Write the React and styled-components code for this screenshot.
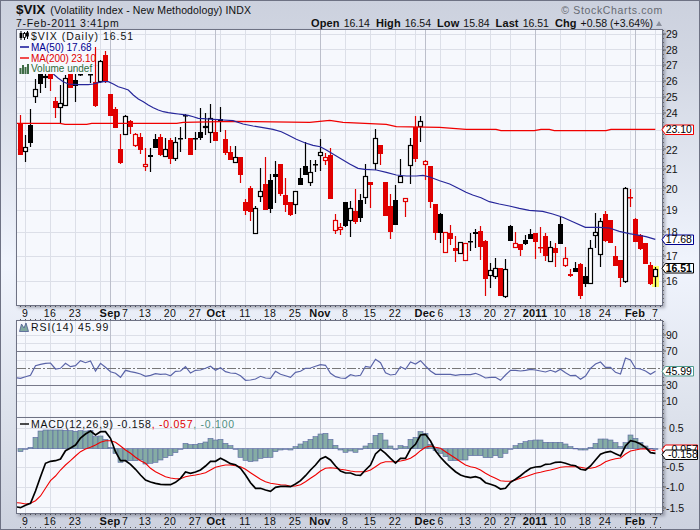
import React from "react";
import styled, { createGlobalStyle } from "styled-components";

const Global = createGlobalStyle`
  html, body { margin: 0; padding: 0; background: #d0d5e1; }
  #root { width: 700px; height: 530px; }
`;

const sans = `"Liberation Sans", Arial, sans-serif`;

const Frame = styled.div`
  box-sizing: border-box;
  width: 700px;
  height: 530px;
  border: 1px solid #6e7284;
  padding: 0 0 0 15px;
  overflow: hidden;
  background: linear-gradient(180deg, #ccd1de 0%, #d2d7e3 12%, #f0f4fd 50%, #dde2ec 78%, #cdd2df 100%);
  font-family: ${sans};
  color: #111;
`;
const Header = styled.header`
  height: 28px;
  width: 647px;
  display: flex;
  flex-direction: column;
`;
const TopRow = styled.div`
  height: 16px;
  display: flex;
  align-items: flex-end;
  justify-content: space-between;
  white-space: nowrap;
`;
const Title = styled.div`
  display: flex;
  align-items: baseline;
  gap: 5px;
`;
const Symbol = styled.b`
  font-size: 13.5px;
  line-height: 14px;
`;
const Name = styled.span`
  font-size: 10.5px;
  letter-spacing: 0.13px;
`;
const Logo = styled.span`
  font-size: 10.5px;
  letter-spacing: 0.65px;
  color: #666a72;
  margin-bottom: 1px;
`;
const BottomRow = styled.div`
  height: 12px;
  display: flex;
  justify-content: space-between;
  align-items: center;
  white-space: nowrap;
  font-size: 10.5px;
`;
const Stamp = styled.span`
  letter-spacing: 0.7px;
`;
const Quote = styled.div`
  display: flex;
  align-items: baseline;
  gap: 4px;
`;
const QLabel = styled.b`
  font-size: 11px;
  letter-spacing: 0.1px;
  margin-left: ${(p) => (p.$first ? 0 : 2)}px;
`;
const QValue = styled.span`
  font-size: 10.5px;
`;
const Arrow = styled.i`
  width: 0;
  height: 0;
  margin-left: -1px;
  margin-right: 1px;
  border-left: 3.5px solid transparent;
  border-right: 3.5px solid transparent;
  border-bottom: 5px solid #8a8f9c;
  align-self: center;
`;

const Pane = styled.div`
  display: flex;
  align-items: stretch;
  height: ${(p) => p.$h}px;
  margin-top: ${(p) => p.$overlap || 0}px;
`;
const Plot = styled.div`
  position: relative;
  box-sizing: border-box;
  width: 647px;
  height: 100%;
  flex: none;
  border: 1px solid #6e7284;
  background: #f6f8fd;
  box-shadow: 2px 2px 3px rgba(40, 44, 60, 0.35);
`;
const PlotSvg = styled.svg`
  display: block;
  width: 645px;
  height: 100%;
  overflow: hidden;
`;
const AxisSvg = styled.svg`
  display: block;
  position: relative;
  width: 36px;
  height: 100%;
  flex: none;
  overflow: visible;
  z-index: 2;
  font-family: ${sans};
`;
const DateSvg = styled.svg`
  display: block;
  width: 647px;
  height: ${(p) => p.$h}px;
  overflow: visible;
  font-family: ${sans};
`;
const Legend = styled.div`
  position: absolute;
  left: 0;
  top: 0;
  width: ${(p) => p.$w}px;
  height: ${(p) => p.$h}px;
  background: ${(p) => (p.$clear ? "transparent" : "#f6f8fd")};
  padding-top: 1px;
  box-sizing: border-box;
`;
const LegendRow = styled.div`
  display: flex;
  align-items: center;
  height: 10.8px;
  gap: 2px;
  padding-left: 2px;
  white-space: nowrap;
  font-size: ${(p) => p.$size || 10}px;
  letter-spacing: ${(p) => p.$ls ?? 0}px;
  color: ${(p) => p.$color || "#111"};
  svg { flex: none; }
`;
const LegendText = styled.span`
  color: ${(p) => p.$color || "inherit"};
`;

const gx = [25.5,50.5,75.5,100.5,110.5,125.5,145.5,170.5,195.5,215.5,220.5,245.5,270.5,295.5,320.5,345.5,370.5,395.5,415.5,425.5,440.5,465.5,490.5,510.5,535.5,560.5,585.5,605.5,630.5,635.5,655.5];
const darkGx = new Set([110.5,215.5,320.5,425.5,535.5,635.5]);
const dates = [["9",25],["16",50],["23",75],["Sep",110,1],["7",125],["13",145],["20",170],["27",195],["Oct",216,1],["11",245],["18",270],["25",295],["Nov",320,1],["8",345],["15",370],["22",395],["Dec",425,1],["6",440.5],["13",465],["20",490],["27",510],["2011",535,1],["10",560],["18",585],["24",605],["Feb",635,1],["7",655]];

const candles = [
[115,155,123,155,"r"],[135,162,147,152,"h"],[109,147,125,143,"b"],[79,103,89,97,"h"],[70,93,74,84,"b"],[72,88,76,78,"h"],[74,91,74,79,"r"],[97,118,101,108,"r"],[85,123,103,108,"h"],[75,106,78,106,"h"],
[74,88,74,88,"r"],[68,102,80,86,"b"],[70,76,74,75,"b"],[70,72,71,72,"b"],[70,83,74,75,"b"],[47,107,82,106,"r"],[60,83,61,82,"h"],[51,83,55,82,"r"],[94,116,94,116,"r"],[107,128,109,128,"r"],
[134,164,149,163,"r"],[115,135,116,135,"h"],[120,134,121,127,"r"],[133,147,134,146,"o"],[133,154,137,150,"r"],[148,171,164,167,"o"],[148,172,155,157,"b"],[134,148,139,148,"b"],[134,156,137,155,"r"],[138,157,149,157,"h"],
[138,164,140,159,"r"],[137,161,142,159,"h"],[127,152,138,139,"b"],[114,139,115,116,"b"],[138,155,138,155,"r"],[132,150,138,139,"b"],[108,140,132,138,"b"],[113,135,126,128,"h"],[104,143,118,133,"h"],[120,141,132,141,"r"],
[107,132,119,122,"b"],[130,155,139,153,"r"],[146,160,152,160,"r"],[146,163,157,163,"h"],[157,183,157,175,"r"],[199,215,202,211,"r"],[186,221,188,212,"r"],[206,234,208,234,"h"],[168,202,191,197,"h"],[157,210,184,210,"r"],
[174,213,180,209,"b"],[161,203,174,177,"b"],[164,196,164,194,"r"],[178,212,195,205,"r"],[202,216,202,215,"r"],[191,214,191,205,"h"],[168,185,178,185,"b"],[142,175,166,175,"b"],[160,186,172,183,"h"],[160,172,164,165,"b"],
[139,171,152,156,"h"],[153,165,157,161,"o"],[148,199,155,199,"r"],[214,234,220,231,"o"],[223,235,227,230,"o"],[202,227,202,226,"b"],[201,237,208,221,"h"],[189,224,211,222,"r"],[194,222,200,218,"b"],[164,204,176,198,"h"],
[182,208,182,185,"r"],[129,170,138,164,"h"],[145,165,145,154,"r"],[182,216,182,216,"r"],[194,239,206,232,"r"],[185,225,200,225,"b"],[159,183,176,183,"h"],[198,217,198,202,"o"],[138,184,145,166,"h"],[116,162,127,159,"r"],
[116,142,121,127,"h"],[160,180,161,165,"o"],[166,208,166,202,"r"],[204,240,204,233,"r"],[213,243,214,233,"b"],[232,253,232,253,"o"],[225,245,233,239,"r"],[236,262,248,251,"r"],[242,254,242,254,"h"],[243,261,243,261,"o"],
[233,251,241,242,"b"],[229,248,232,234,"b"],[226,260,231,247,"r"],[240,296,241,279,"r"],[263,288,270,276,"h"],[258,279,268,277,"h"],[268,296,268,296,"r"],[259,298,269,297,"h"],[225,241,226,241,"b"],[232,248,243,248,"o"],
[244,256,244,250,"r"],[235,245,240,244,"b"],[229,239,234,239,"b"],[233,259,233,242,"r"],[227,253,247,248,"r"],[233,261,236,256,"r"],[241,262,247,262,"h"],[243,267,248,253,"r"],[217,244,224,244,"b"],[247,267,258,266,"o"],
[269,277,274,276,"r"],[262,272,268,272,"b"],[263,299,264,296,"r"],[267,287,276,284,"b"],[240,284,248,284,"h"],[213,248,232,236,"h"],[218,267,221,255,"h"],[211,242,214,241,"r"],[220,243,220,243,"r"],[246,266,256,266,"r"],
[260,287,260,278,"r"],[187,283,188,282,"h"],[189,207,197,198,"r"],[218,242,219,242,"r"],[234,250,235,249,"r"],[243,264,243,264,"r"],[262,285,265,284,"r"],[267,287,269,277,"h"],
];

const rsi = [
  [290,[263,265,260,256,227,223,220,219,237,235,220,230,227,212,218,213,243,220,232,245,250,262,241,245,248,252,259,256,251,253,252,257,244,243,230,249,241,240,235,229,241,233,245,249]],
  [290,[250,257,271,270,267,259,264,265,244,253,257,262,247,244,235,234,229,224,226,250,260,264,265,254,258,256,229,232,208,218,248,255,253,230,238,216,222,212,228,243,253,253,253,253,256,254,254]],
  [290,[254,250,256,264,262,262,271,255,241,241,243,241,238,240,243,246,241,246,238,248,257,256,268,258,235,222,216,232,232,247,252,204,210,235,237,243,253,244]],
];
const macd = [
  [410,[290,293,286,280,243,200,160,154,152,147,122,114,105,84,72,63,75,65,65,85,125,152,152,163,178,195,210,216,220,223,224,224,217,205,186,190,186,180,168,154,154,145,152,161]],
  [410,[164,175,195,218,235,235,240,244,232,229,229,230,222,212,197,180,165,147,140,150,168,183,189,189,195,196,180,165,132,118,130,145,159,145,145,117,103,75,73,93,122,142,158,172,185,195,200]],
  [410,[203,200,205,218,223,228,237,235,217,208,197,185,175,171,170,163,162,157,156,160,165,167,178,180,168,150,133,127,124,131,138,108,92,95,102,112,128,130]],
];
const signal = [
  [410,[278,279,282,280,272,258,235,212,198,180,165,152,138,125,117,112,105,97,92,92,97,108,120,130,142,152,160,175,185,193,200,204,206,206,200,197,195,192,188,180,172,168,165,165]],
  [410,[167,170,178,188,198,208,215,220,222,224,225,229,228,224,215,205,195,183,175,173,175,178,180,183,185,185,185,180,170,160,155,155,155,153,150,145,135,122,112,108,112,115,125,135,145,155,165]],
  [410,[170,173,180,190,198,205,212,214,214,210,205,200,195,190,187,183,180,176,172,170,170,170,172,175,175,172,165,155,150,146,144,132,123,120,117,116,120,122]],
];
const hist = [125,117,112,82,63,60,60,60,60,61,62,64,62,63,62,80,78,88,112,130,157,152,152,152,150,162,160,157,150,143,137,128,118,100,104,103,100,96,85,90,88,100,107,117,142,151,155,153,145,143,142,125,120,118,120,110,102,95,88,80,72,70,88,106,120,127,123,127,118,108,100,76,70,90,108,117,107,110,88,82,65,70,103,122,130,140,152,152,150,150,137,137,137,143,143,137,143,130,117,107,100,95,92,90,90,97,97,97,97,102,110,115,120,120,112,100,87,87,90,98,110,98,75,85,97,108,115,117];

const series = (segs) => {
  const ys = segs.flatMap(([base, vals]) => vals.map((v) => base + v / 3));
  return ys.map((y, i) => `${15.5 + 5 * i},${y.toFixed(1)}`).join(" ");
};
const zpts = (ox, oy, list) => list.map(([x, y]) => `${(ox + x / 3).toFixed(1)},${(oy + y / 3).toFixed(1)}`).join(" ");

const ma50 = [
  zpts(0,0,[[160,222],[175,235],[190,245],[205,252],[220,253],[235,254],[250,254],[265,254],[280,252],[295,248],[310,245],[325,245],[340,252],[355,260],[370,265],[385,270],[400,285],[415,297],[430,305],[445,315],[460,323],[475,330],[490,335],[505,338],[520,340],[535,342],[550,344],[565,346],[580,350],[595,355],[610,356],[625,357],[640,358],[655,359],[670,360],[699,362]]),
  zpts(233,0,[[30,372],[60,378],[90,383],[120,388],[145,395],[165,405],[190,418],[215,428],[240,436],[262,440],[280,450],[300,462],[325,477],[350,492],[375,505],[395,508],[430,510],[460,517],[490,525]]),
  zpts(233,130,[[520,138],[550,138],[570,136],[590,141],[620,152],[650,162],[680,177],[699,187]]),
  zpts(466,130,[[20,195],[45,203],[70,215],[100,222],[130,228],[160,235],[190,241],[230,244],[260,252],[290,262],[320,275],[358,292],[400,292],[430,294],[460,304],[490,311],[520,316],[540,320],[568,328]]),
].join(" ");
const ma200 = [
  zpts(0,0,[[50,370],[180,370],[195,373],[260,373],[275,370],[530,370],[550,367],[699,364]]),
  zpts(233,0,[[230,367],[290,361],[330,367],[460,373],[490,380],[620,382],[699,388]]),
  zpts(466,0,[[90,388],[105,392],[205,392],[225,388],[250,388],[265,392],[420,392],[435,388],[568,388]]),
].join(" ");

const GridV = ({ y1, y2 }) => (
  <g>
    {gx.map((x) => (
      <line key={x} x1={x} x2={x} y1={y1} y2={y2} stroke={darkGx.has(x) ? "#bcbfcb" : "#dcdfe8"} strokeWidth="1" />
    ))}
  </g>
);
const GridH = ({ ys, color = "#dcdfe8" }) => (
  <g>
    {ys.map((y) => (
      <line key={y} x1="17" x2="662" y1={y} y2={y} stroke={color} strokeWidth="1" />
    ))}
  </g>
);

const Candle = ({ d: [top, bot, bt, bb, type], k }) => {
  const x = 20.5 + 5 * k;
  const red = type === "r" || type === "o";
  const ink = red ? "#e00000" : "#000";
  const hollow = type === "h" || type === "o";
  return (
    <g>
      <line x1={x} x2={x} y1={top} y2={bot} stroke={ink} strokeWidth="1.2" />
      {hollow ? (
        <rect x={x - 2} y={bt + 0.5} width="4" height={Math.max(bb - bt - 1, 1)} fill="#fff" stroke={ink} strokeWidth="1.2" />
      ) : (
        <rect x={x - 2.5} y={bt} width="5" height={Math.max(bb - bt, 1.5)} fill={ink} />
      )}
    </g>
  );
};

const Tag = ({ y, text, color, bold, w = 28, tx = 665.7 }) => (
  <g>
    <path d={`M665.5 ${y} h${w} v9.5 h-${w} l-3.5 -4.75 z`} fill="#fff" stroke={color} strokeWidth="1" />
    <text x={tx} y={y + 8.3} fontSize="10.5" fontWeight={bold ? 700 : 400} fill="#000">{text}</text>
  </g>
);

const AxisLabels = ({ items }) => (
  <g fontSize="10.5" fill="#111">
    {items.map(([t, y, x = 666]) => (
      <text key={t} x={x} y={y + 4}>{t}</text>
    ))}
  </g>
);
const AxisTicks = ({ y1, y2, major }) => (
  <g>
    <line x1="663.5" x2="663.5" y1={y1} y2={y2} stroke="#666" strokeWidth="1" strokeDasharray="1 3" />
    {major.map((y) => (
      <line key={y} x1="663" x2="666" y1={y} y2={y} stroke="#666" strokeWidth="1" />
    ))}
  </g>
);

const DateAxis = ({ top, h }) => (
  <DateSvg $h={h} viewBox={`16 ${top} 647 ${h}`}>
    <line x1="17" x2="662" y1={top + 0.5} y2={top + 0.5} stroke="#555" strokeWidth="1" strokeDasharray="1 4" strokeDashoffset="-3" />
    <line x1="17" x2="662" y1={top + h - 0.5} y2={top + h - 0.5} stroke="#555" strokeWidth="1" strokeDasharray="1 4" strokeDashoffset="-3" />
    {dates.map(([t, x, b], i) => (
      <text key={i} x={x} y={top + 11} textAnchor="middle" fontSize={b ? 11 : 10.5} fontWeight={b ? 700 : 400} fill="#111" letterSpacing={b ? 0.2 : 0.3}>{t}</text>
    ))}
  </DateSvg>
);

const IconCandles = () => (
  <svg width="10" height="10" viewBox="0 0 10 10"><path d="M2 0v9M5.5 1v8M8.5 0v8" stroke="#000" strokeWidth="1" /><rect x="0.6" y="2" width="2.8" height="5" fill="#000" /><rect x="4.5" y="2.5" width="2" height="4" fill="#fff" stroke="#000" strokeWidth="0.8" /><rect x="7" y="1.5" width="2.8" height="4" fill="#000" /></svg>
);
const IconLine = ({ color }) => (
  <svg width="10" height="10" viewBox="0 0 10 10"><line x1="1" x2="10" y1="5" y2="5" stroke={color} strokeWidth="1.4" /></svg>
);
const IconVolume = () => (
  <svg width="10" height="10" viewBox="0 0 10 10" fill="#3d6b45"><rect x="0.5" y="4" width="2" height="6" /><rect x="3" y="1" width="2" height="9" /><rect x="5.5" y="3" width="2" height="7" /><rect x="8" y="0" width="2" height="10" /></svg>
);
const IconRsi = () => (
  <svg width="10" height="10" viewBox="0 0 10 10"><path d="M0.5 9.5 L2.5 2 L5 6 L7 1 L9.5 9.5 z" fill="#7fa8a0" stroke="#4b5a90" strokeWidth="0.8" /></svg>
);

export default function App() {
  return (
    <>
      <Global />
      <Frame>
        <Header>
          <TopRow>
            <Title>
              <Symbol>$VIX</Symbol>
              <Name>(Volatility Index - New Methodology) INDX</Name>
            </Title>
            <Logo>© StockCharts.com</Logo>
          </TopRow>
          <BottomRow>
            <Stamp>7-Feb-2011 3:41pm</Stamp>
            <Quote>
              <QLabel $first>Open</QLabel><QValue>16.14</QValue>
              <QLabel>High</QLabel><QValue>16.54</QValue>
              <QLabel>Low</QLabel><QValue>15.84</QValue>
              <QLabel>Last</QLabel><QValue>16.51</QValue>
              <QLabel>Chg</QLabel><QValue>+0.58 (+3.64%)</QValue>
              <Arrow />
            </Quote>
          </BottomRow>
        </Header>

        <Pane $h={277}>
          <Plot>
            <PlotSvg viewBox="17 30 645 275">
              <GridH ys={[34.5,49.5,65.5,81.5,97.5,113.5,130.5,149.5,168.5,188.5,210.5,232.5,256.5,281.5]} />
              <GridV y1={30} y2={305} />
              <rect x="652" y="266" width="7" height="21" fill="#ffff66" />
              {candles.map((d, k) => <Candle key={k} d={d} k={k} />)}
              <polyline points={ma200} fill="none" stroke="#f00000" strokeWidth="1.2" />
              <polyline points={ma50} fill="none" stroke="#26269a" strokeWidth="1.2" />
            </PlotSvg>
            <Legend $w={76} $h={44}>
              <LegendRow $size={10.5} $ls={1}><IconCandles /><span>$VIX (Daily) 16.51</span></LegendRow>
              <LegendRow $color="#000090"><IconLine color="#000090" /><span>MA(50) 17.68</span></LegendRow>
              <LegendRow $color="#e00000" $ls={-0.1}><IconLine color="#f00000" /><span>MA(200) 23.10</span></LegendRow>
              <LegendRow $color="#2f6b3a"><IconVolume /><span>Volume undef</span></LegendRow>
            </Legend>
          </Plot>
          <AxisSvg viewBox="663 29 36 277">
            <AxisTicks y1={30} y2={305} major={[34,50,65,81,97,113,149,169,188,210,232,256,281]} />
            <AxisLabels items={[["29",34],["28",49.5],["27",64.5],["26",80.5],["25",96.5],["24",113],["22",149.5],["21",168.5],["20",188.5],["19",210],["18",232],["17",256],["16",281]]} />
            <Tag y={125} text="23.10" color="#f00000" />
            <Tag y={235} text="17.68" color="#000090" />
            <Tag y={263.5} text="16.51" color="#000" bold />
          </AxisSvg>
        </Pane>

        <DateAxis top={306} h={14} />

        <Pane $h={98}>
          <Plot>
            <PlotSvg viewBox="17 321 645 96">
              <GridH ys={[335.5,343.5,360.5,376.5,393.5,401.5]} />
              <GridV y1={321} y2={417} />
              <line x1="17" x2="662" y1="351.5" y2="351.5" stroke="#77798a" strokeWidth="1" />
              <line x1="17" x2="662" y1="385.5" y2="385.5" stroke="#77798a" strokeWidth="1" />
              <line x1="17" x2="662" y1="368.5" y2="368.5" stroke="#777" strokeWidth="1" strokeDasharray="9 2 2 2" />
              <polyline points={series(rsi)} fill="none" stroke="#5a64a8" strokeWidth="1.2" />
            </PlotSvg>
            <Legend $w={120} $h={12} $clear>
              <LegendRow $size={10.5} $ls={1}><IconRsi /><span>RSI(14) 45.99</span></LegendRow>
            </Legend>
          </Plot>
          <AxisSvg viewBox="663 320 36 98">
            <AxisTicks y1={321} y2={417} major={[335,351,385,401]} />
            <AxisLabels items={[["90",335],["70",351],["30",385],["10",401]]} />
            <Tag y={366.5} text="45.99" color="#4f9a8c" />
          </AxisSvg>
        </Pane>

        <Pane $h={97} $overlap={-1}>
          <Plot>
            <PlotSvg viewBox="17 418 645 95">
              <GridH ys={[428.5,448.5,467.5,487.5,507.5]} />
              <GridV y1={418} y2={513} />
              {hist.map((v, k) => {
                const y = 410 + v / 3;
                const top = Math.min(y, 448.7);
                const h = Math.max(Math.abs(y - 448.7), 0.6);
                return <rect key={k} x={18 + 5 * k} y={top} width="5" height={h} fill="#85aca4" stroke="#5a66a4" strokeWidth="0.6" />;
              })}
              <polyline points={series(signal)} fill="none" stroke="#f00000" strokeWidth="1.1" />
              <polyline points={series(macd)} fill="none" stroke="#000" strokeWidth="1.7" />
            </PlotSvg>
            <Legend $w={240} $h={12} $clear>
              <LegendRow $size={10.5} $ls={0.75}>
                <IconLine color="#000" />
                <span>MACD(12,26,9) -0.158<LegendText $color="#e00000">, -0.057</LegendText><LegendText $color="#4f8f80">, -0.100</LegendText></span>
              </LegendRow>
            </Legend>
          </Plot>
          <AxisSvg viewBox="663 417 36 97">
            <AxisTicks y1={418} y2={513} major={[428,448,467,487,508]} />
            <AxisLabels items={[["0.5",428,669],["-0.5",467],["-1.0",487],["-1.5",508]]} />
            <Tag y={445} text="-0.057" color="#f00000" w={32} tx={668} />
            <Tag y={450} text="-0.158" color="#000" w={32} tx={668} />
          </AxisSvg>
        </Pane>

        <DateAxis top={514} h={14} />
      </Frame>
    </>
  );
}
